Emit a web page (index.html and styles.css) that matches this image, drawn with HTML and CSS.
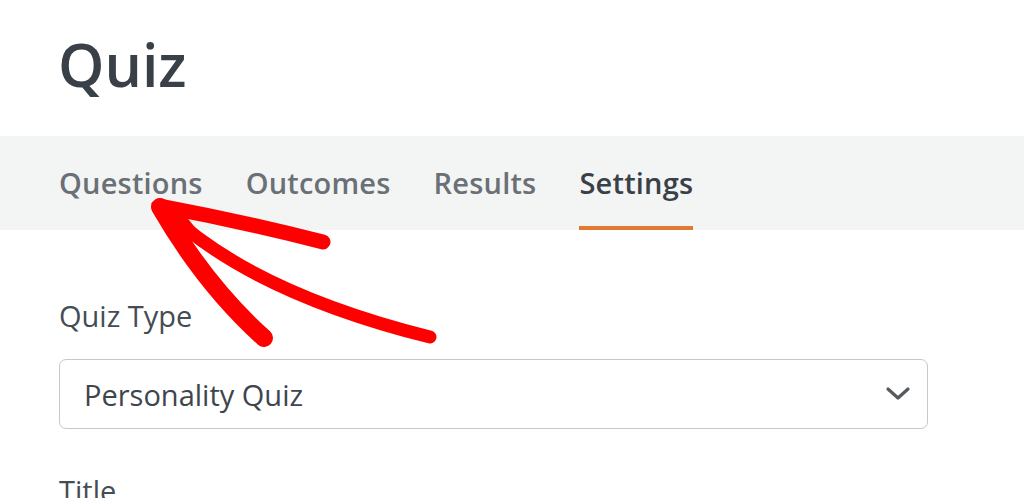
FILE: index.html
```html
<!DOCTYPE html>
<html lang="en">
<head>
<meta charset="utf-8">
<title>Quiz</title>
<link rel="stylesheet" href="styles.css">
</head>
<body>
<div class="page">
  <h1 class="title">Quiz</h1>
  <nav class="tabs">
    <span class="tab">Questions</span>
    <span class="tab">Outcomes</span>
    <span class="tab">Results</span>
    <span class="tab active">Settings</span>
  </nav>
  <div class="form">
    <label class="label">Quiz Type</label>
    <div class="select">
      <span class="select-text">Personality Quiz</span>
      <svg class="chev" width="26" height="16" viewBox="0 0 26 16"><path d="M3 3 L13 12 L23 3" fill="none" stroke="#555a5f" stroke-width="3.2" stroke-linecap="round" stroke-linejoin="round"/></svg>
    </div>
    <label class="label label2">Title</label>
  </div>
  <svg class="arrow" width="1024" height="498" viewBox="0 0 1024 498">
    <g fill="none" stroke="#ff0000" stroke-linecap="round" stroke-linejoin="round">
      <path d="M160 206 Q 245 222 323 242" stroke-width="15"/>
      <path d="M160 207 Q 205 285 264 338" stroke-width="18"/>
      <path d="M165 210 Q 250 292 430 337" stroke-width="13"/>
    </g>
    <path d="M151 203 L176 204 L202 236 L182 247 Z" fill="#ff0000"/>
  </svg>
</div>
</body>
</html>
```
FILE: styles.css
```css
html, body {
  margin: 0;
  padding: 0;
  background: #ffffff;
}
body {
  font-family: "Open Sans", "Noto Sans", sans-serif;
  color: #3b4148;
  width: 1024px;
  height: 498px;
  overflow: hidden;
}
.page {
  position: relative;
  height: 498px;
}
.title {
  margin: 0;
  padding: 24px 0 0 58px;
  height: 112px;
  box-sizing: border-box;
  font-size: 59px;
  font-weight: 600;
  line-height: 80px;
  color: #3a4048;
  letter-spacing: 0;
}
.tabs {
  display: flex;
  gap: 43px;
  background: #f3f5f4;
  height: 94px;
  box-sizing: border-box;
  padding: 0 0 0 59px;
  margin-top: 24px;
  align-items: stretch;
}
.tab {
  display: flex;
  align-items: center;
  font-size: 29px;
  font-weight: 600;
  color: #6a7076;
  letter-spacing: 0.2px;
  box-sizing: border-box;
  padding-top: 2px;
  border-bottom: 4px solid transparent;
}
.tab.active {
  color: #3a4048;
  border-bottom-color: #e27a33;
}
.form {
  padding: 0 96px 0 59px;
}
.label {
  display: block;
  font-size: 29px;
  color: #454c53;
  margin-top: 66px;
  line-height: 40px;
}
.select {
  margin-top: 23px;
  height: 70px;
  border: 1.5px solid #c6c8ca;
  border-radius: 7px;
  box-sizing: border-box;
  display: flex;
  align-items: center;
  justify-content: space-between;
  padding: 0 16px 0 24px;
}
.select-text {
  font-size: 29px;
  color: #3e454c;
}
.chev {
  display: block;
}
.label2 {
  margin-top: 42px;
}
.arrow {
  position: absolute;
  left: 0;
  top: 0;
  pointer-events: none;
}
```
